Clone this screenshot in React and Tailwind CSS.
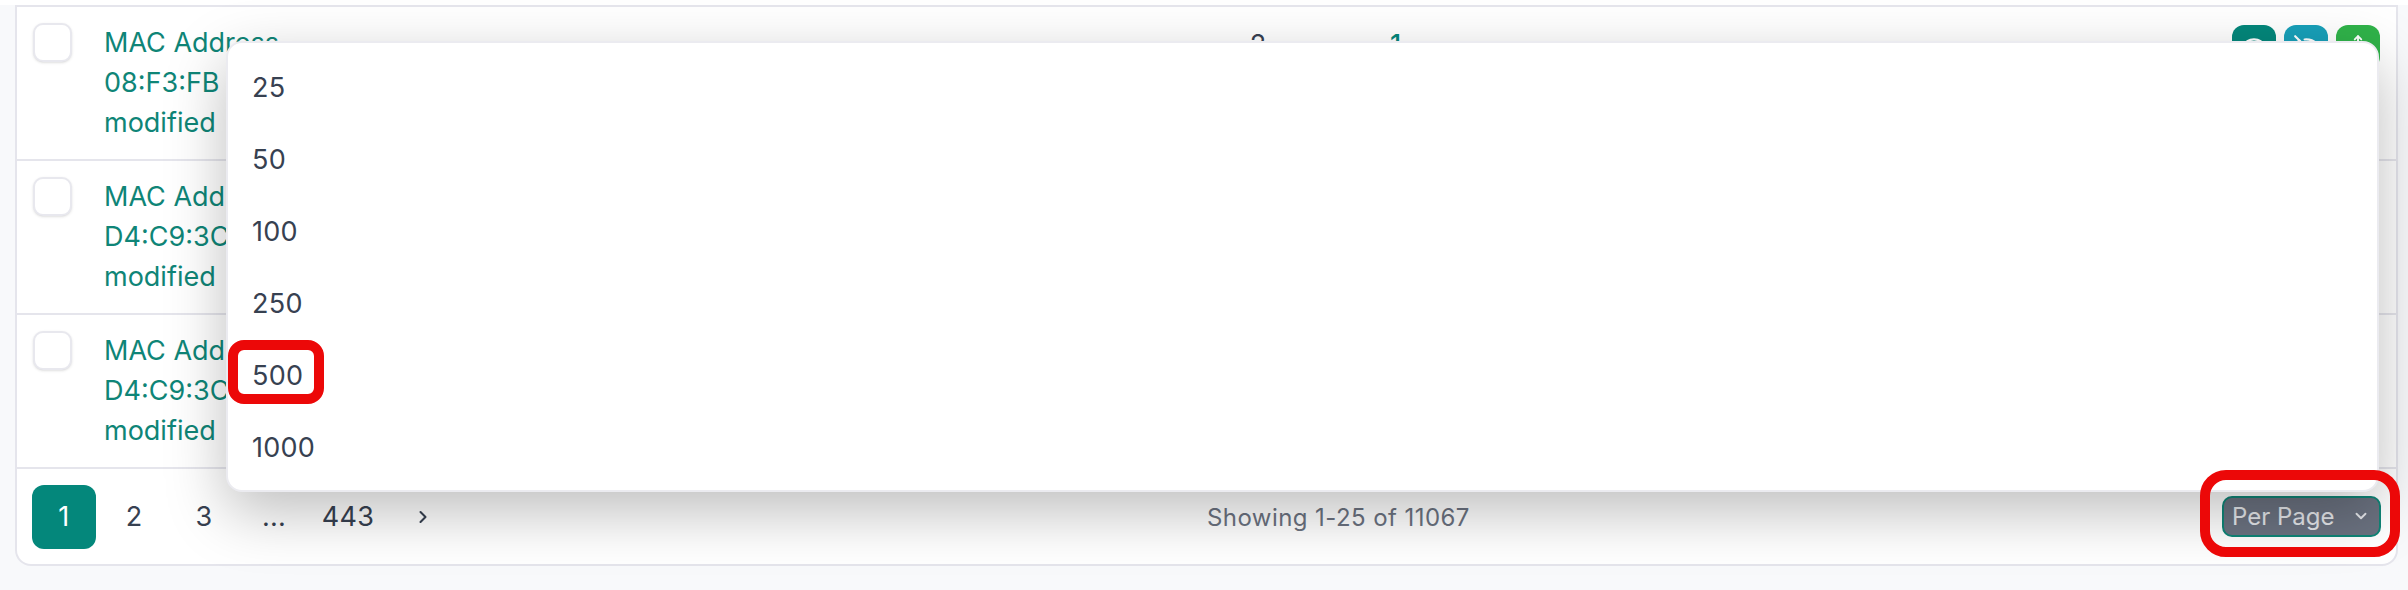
import React from "react";
import { ChevronDown, ChevronRight, Eye, Move, WifiOff } from "lucide-react";

const rows = [
  { mac: "08:F3:FB", first: true },
  { mac: "D4:C9:3C" },
  { mac: "D4:C9:3C" },
];

const options = [25, 50, 100, 250, 500, 1000];

const Row = ({ mac, first }) => (
  <div className="flex h-[154px] border-t-2 border-[#e5e5ec] bg-white">
    <div className="pl-[16px] pt-4">
      <div className="h-[39px] w-[39px] rounded-[10px] border-2 border-[#e8e8ee] bg-white shadow-sm" />
    </div>
    <div className="pl-[32px] pt-[16px] text-[27px] leading-[40px] text-[#0f8577]">
      <div>MAC Address</div>
      <div>{mac}</div>
      <div>modified</div>
    </div>
    {first && (
      <div className="absolute left-[1126px] top-[25px] flex">
        <div className="w-[264px] text-center text-[27px] leading-[40px] text-[#374151]">2</div>
        <div className="w-[842px] text-[27px] font-medium leading-[40px] text-[#04877b]">1</div>
        <div className="flex gap-2">
          <button className="flex h-11 w-11 items-center justify-center rounded-xl bg-[#04877b] text-white"><Eye size={26} /></button>
          <button className="flex h-11 w-11 items-center justify-center rounded-xl bg-[#18a0b9] text-white"><WifiOff size={26} /></button>
          <button className="flex h-11 w-11 items-center justify-center rounded-xl bg-[#30b34a] text-white"><Move size={26} strokeWidth={1.75} /></button>
        </div>
      </div>
    )}
  </div>
);

const PageButton = ({ children, active, wide }) => (
  <button
    className={`flex h-16 items-center justify-center rounded-xl pt-[2px] text-[27px] tracking-[0.01em] ${wide ? "w-[72px]" : "w-16"} ${active ? "bg-[#04877b] text-white" : "text-[#374151]"}`}
  >
    {children}
  </button>
);

export default function App() {
  return (
    <div className="relative h-[590px] w-[2408px] overflow-hidden bg-[#f8f9fb] font-['Inter',sans-serif]">
      <div className="h-[5px] bg-white" />
      <div className="ml-[15px] w-[2383px] overflow-hidden rounded-b-2xl border-x-2 border-b-2 border-[#e5e5ec] bg-white">
        {rows.map((r, i) => (
          <Row key={i} {...r} />
        ))}
        <div className="flex h-[97px] items-center border-t-2 border-[#e5e5ec] pl-[15px] pr-[15px]">
          <div className="flex w-[560px] items-center gap-[6px]">
            <PageButton active>1</PageButton>
            <PageButton>2</PageButton>
            <PageButton>3</PageButton>
            <PageButton>...</PageButton>
            <PageButton wide>443</PageButton>
            <button className="flex h-16 w-16 items-center justify-center pl-[2px] text-[#374151]">
              <ChevronRight size={20} strokeWidth={2.5} />
            </button>
          </div>
          <div className="ml-[615px] pt-[2px] text-[24px] tracking-[0.018em] text-[#6b7280]">Showing 1-25 of 11067</div>
          <button className="ml-auto flex h-[41px] w-[159px] items-center justify-between rounded-[10px] border-2 border-[#0f8577] bg-[#6b7280] pl-[8px] pr-[9px] text-[24px] text-[#e5e7eb]">
            Per Page
            <ChevronDown size={18} strokeWidth={2.5} className="-mt-[2px]" />
          </button>
        </div>
      </div>

      {/* dropdown menu */}
      <div className="absolute left-[226px] top-[41px] h-[451px] w-[2153px] rounded-2xl border-2 border-[#ebebf0] bg-white pl-[24px] pt-[9px] shadow-[0_20px_60px_0_rgba(0,0,0,0.26)]">
        {options.map((o) => (
          <div key={o} className="flex h-[72px] items-center text-[27px] tracking-[0.01em] text-[#374151]">
            {o}
          </div>
        ))}
      </div>

      {/* red annotations */}
      <div className="absolute left-[228px] top-[340px] h-[64px] w-[96px] rounded-[16px] border-[10px] border-[#ec0808]" />
      <div className="absolute left-[2200px] top-[470px] h-[87px] w-[200px] rounded-[26px] border-[10px] border-[#ec0808]" />
    </div>
  );
}
